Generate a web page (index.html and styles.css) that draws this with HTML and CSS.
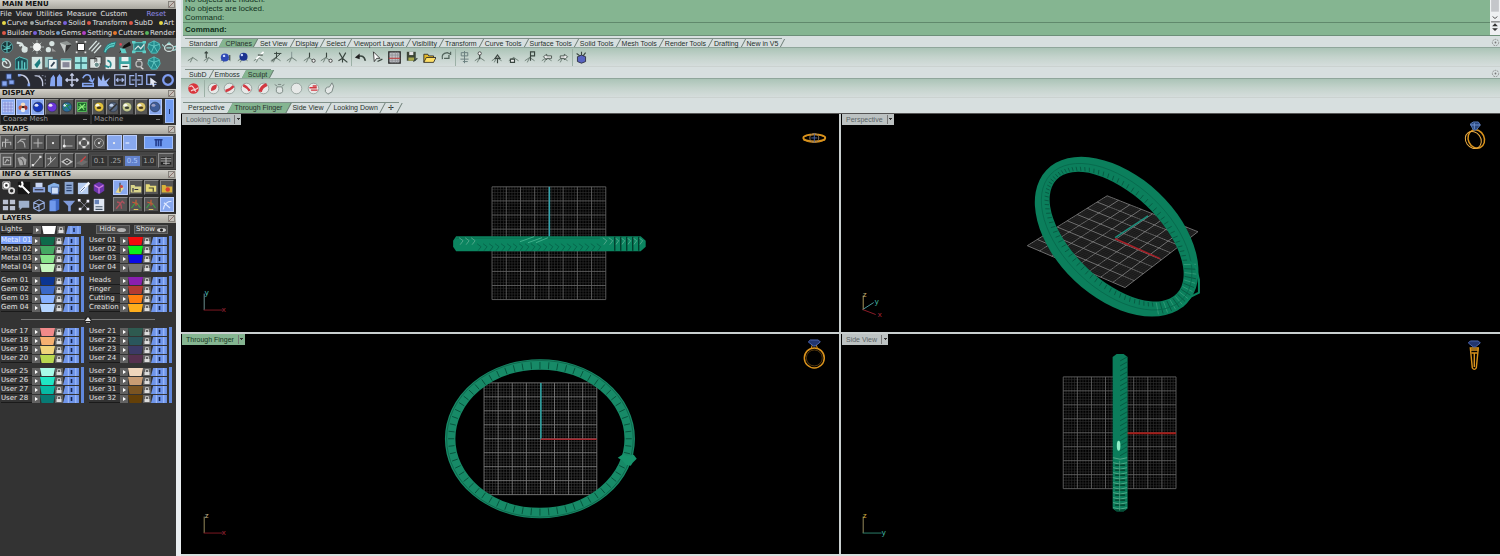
FILE: index.html
```html
<!DOCTYPE html>
<html lang="en">
<head>
<meta charset="utf-8">
<title>Jewelry CAD workspace</title>
<link rel="stylesheet" href="styles.css">
</head>
<body>
<div class="app">
  <aside class="sidebar">
    <section>
      <h2 class="panel-title">MAIN MENU<button class="close" aria-label="Close main menu"></button></h2>
      <nav class="menu">
        <button>File</button><button>View</button><button>Utilities</button><button>Measure</button><button>Custom</button><button class="reset">Reset</button>
      </nav>
      <nav class="cats">
        <button><i class="dot yellow"></i>Curve</button><button><i class="dot grey"></i>Surface</button><button><i class="dot violet"></i>Solid</button><button><i class="dot red"></i>Transform</button><button><i class="dot red"></i>SubD</button><button class="last"><i class="dot yellow"></i>Art</button>
      </nav>
      <nav class="cats tight">
        <button><i class="dot red"></i>Builder</button><button><i class="dot violet"></i>Tools</button><button><i class="dot steel"></i>Gems</button><button><i class="dot magenta"></i>Setting</button><button><i class="dot orange"></i>Cutters</button><button><i class="dot green"></i>Render</button>
      </nav>
      <div class="tools grey-bg">
        <div class="icons" data-icons="globe knot sun shade cone boxsel lines surf ink frame gem teapot"></div>
        <div class="icons" data-icons="hook towers page pages photo panes cards sheet disk ringlet gem none"></div>
      </div>
      <div class="icons blue-row" data-icons="blocks arc curve clap move rotate burst swap mirror pick ringb"></div>
    </section>

    <section>
      <h2 class="panel-title">DISPLAY<button class="close" aria-label="Close display"></button></h2>
      <div class="display">
        <div class="disp-left">
          <div class="icons boxed" data-icons="*grid *flower *sphere sphere2 sphere3 leaf"></div>
          <select aria-label="Mesh quality"><option>Coarse Mesh</option></select>
        </div>
        <div class="disp-right">
          <div class="icons boxed" data-icons="gold pearl pale gold2 *sphere4"></div>
          <select aria-label="Display material"><option>Machine</option></select>
        </div>
        <button class="tall" aria-label="Toggle display"></button>
      </div>
    </section>

    <section>
      <h2 class="panel-title">SNAPS<button class="close" aria-label="Close snaps"></button></h2>
      <div class="snaps">
        <div class="icons boxed nine" data-icons="s1 s2 s3 s4 s5 s6 s7 *s4 *s8"></div>
        <button class="wide" aria-label="Project"><svg viewBox="0 0 16 12"><path d="M3 2h10M5 2v8M8 2v8M11 2v8" stroke="#223c8c" stroke-width="2"/></svg></button>
      </div>
      <div class="snaps second">
        <div class="icons boxed six" data-icons="t1 t2 t3 t4 t5 t6"></div>
        <div class="steps"><button>0.1</button><button>.25</button><button class="on">0.5</button><button>1.0</button></div>
        <div class="icons boxed one" data-icons="t7"></div>
      </div>
    </section>

    <section>
      <h2 class="panel-title">INFO &amp; SETTINGS<button class="close" aria-label="Close info"></button></h2>
      <div class="info">
        <div class="icons seven" data-icons="gears wrench printer cubes doc pen purple"></div>
        <div class="icons boxed four" data-icons="*paint folder folder2 folder3"></div>
        <div class="icons seven" data-icons="bricks chat wire book funnel nodes calc"></div>
        <div class="icons boxed four" data-icons="j1 j2 j2 *j3"></div>
      </div>
    </section>

    <section>
      <h2 class="panel-title">LAYERS<button class="close" aria-label="Close layers"></button></h2>
      <div class="lights">
        <div class="layer-group" data-layers="Lights:#ffffff"></div>
        <div class="vis"><button>Hide <i class="eye"></i></button><button>Show <i class="eye open"></i></button></div>
      </div>
      <div class="layers">
        <div class="layer-group" data-layers="Metal 01:#0e6a4a|Metal 02:#43a862|Metal 03:#86e48a|Metal 04:#c5f7c0"></div>
        <div class="layer-group" data-layers="User 01:#f20d0d|User 02:#0af01a|User 03:#0808e6|User 04:#777777"></div>
        <div class="layer-group" data-layers="Gem 01:#0b3592|Gem 02:#3a68c8|Gem 03:#86b0ff|Gem 04:#b4d4ff"></div>
        <div class="layer-group" data-layers="Heads:#8a1fb0|Finger:#b33a32|Cutting:#ff7d0e|Creation:#ffae1c"></div>
      </div>
      <div class="divider"><svg viewBox="0 0 8 8"><circle cx="4" cy="4" r="3.5" fill="#222"/><path d="M1 5l3-4 3 4z" fill="#eee"/><path d="M2 6.500h4" stroke="#aaa"/></svg></div>
      <div class="layers">
        <div class="layer-group" data-layers="User 17:#f08a8a|User 18:#f5b070|User 19:#f0d47a|User 20:#b8d850"></div>
        <div class="layer-group" data-layers="User 21:#2e5a50|User 22:#2a565c|User 23:#3c3a66|User 24:#55304e"></div>
        <div class="layer-group" data-layers="User 25:#a8fbe8|User 26:#1fe6c4|User 27:#06b9a4|User 28:#087a74"></div>
        <div class="layer-group" data-layers="User 29:#f0d6bc|User 30:#c89c74|User 31:#7a5422|User 32:#644008"></div>
      </div>
    </section>
  </aside>

  <main class="main">
    <div class="console">
      <div class="history">
        <p>No objects are hidden.</p><p>No objects are locked.</p><p>Command:</p>
      </div>
      <div class="scroll"><svg viewBox="0 0 10 36"><rect x="1" y="0" width="8" height="12" fill="#c4c6ca"/><path d="M2.500 17l2.500 2 2.500-2M1 22.500h9" fill="none" stroke="#555"/><path d="M2 27h6L5 24zM2 29h6L5 32z" fill="#333"/></svg></div>
      <label class="prompt">Command: <input type="text" aria-label="Command"></label>
    </div>

    <div class="tabs">
      <button>Standard</button><button class="on">CPlanes</button><button>Set View</button><button>Display</button><button>Select</button><button>Viewport Layout</button><button>Visibility</button><button>Transform</button><button>Curve Tools</button><button>Surface Tools</button><button>Solid Tools</button><button>Mesh Tools</button><button>Render Tools</button><button>Drafting</button><button>New in V5</button>
      <button class="gear" aria-label="Toolbar options"><svg viewBox="0 0 10 10"><circle cx="5" cy="5" r="3.500" fill="none" stroke="#888" stroke-dasharray="2 1"/><circle cx="5" cy="5" r="1" fill="#777"/></svg></button>
    </div>
    <div class="toolbar">
      <div class="icons g10" data-icons="c1 c2 cball cball2 c3 c4 c5 c6 c6 c7"></div>
      <div class="icons g6 sep" data-icons="undo cursor mesh save open rot"></div>
      <div class="icons g7 sep" data-icons="cfront cpole cup cside cbox cleft cright"></div>
      <div class="icons g1 sep" data-icons="cblue"></div>
    </div>

    <div class="tabs second">
      <button>SubD</button><button>Emboss</button><button class="on">Sculpt</button>
      <button class="gear" aria-label="Toolbar options"><svg viewBox="0 0 10 10"><circle cx="5" cy="5" r="3.500" fill="none" stroke="#888" stroke-dasharray="2 1"/><circle cx="5" cy="5" r="1" fill="#777"/></svg></button>
    </div>
    <div class="toolbar">
      <div class="icons g1" data-icons="r0"></div>
      <div class="icons g8 sep" data-icons="r1 r2 r3 r4 r5 r6 r7 r8"></div>
    </div>

    <div class="tabs views">
      <button>Perspective</button><button class="on">Through Finger</button><button>Side View</button><button>Looking Down</button><button aria-label="New viewport">✢</button>
    </div>

    <div class="viewports">
      <section class="viewport">
        <svg class="scene" viewBox="181 114 658 218">
          <g data-grid="492 187 606 300" opacity=".8"></g>
          <path d="M549.500 187v50" stroke="#2fa3ad" stroke-width="1.500"/>
          <path d="M456 236.500H641L646 241V247L641 251.500H456L453 247V241Z" fill="#0b8560"/>
          <path d="M456 238.500H600" stroke="#0c6f52"/>
          <path d="M520 242l14-5M528 243l14-5M536 243l12-5" stroke="#3fb08b"/>
          <g id="band-top"></g>
          <path d="M203.500 294v16.500" stroke="#6a8f90"/><path d="M203 310.500h19" stroke="#7d1822"/>
          <text x="204" y="295" fill="#4ab5b0">y</text><text x="221" y="312" fill="#a52638">x</text>
          <g transform="translate(815 138)" fill="none" stroke="#d9921c"><ellipse rx="11" ry="3.500" stroke-width="1.800"/><path d="M-11 2q11 5 22 0M-11-1q11-5 22 0"/><ellipse cy="0" rx="4.500" ry="4.500" stroke="#90785a"/><path d="M-3 0h6M0-4v8" stroke="#4561a0"/></g>
        </svg>
        <button class="vp-label">Looking Down<span></span></button>
      </section>
      <section class="viewport">
        <svg class="scene" viewBox="841 114 659 218">
          <g id="plane"></g>
          <path d="M1115 238L1148 216" stroke="#1b8f7d" stroke-width="1.500"/><path d="M1115 239L1160 259" stroke="#a82028" stroke-width="1.500"/>
          <g id="persp"></g>
          <path d="M862.500 296v14.500" stroke="#a8965a"/><path d="M862 310l11-7" stroke="#4a9a9c"/><path d="M862 310l13 5" stroke="#8d1c28"/>
          <text x="862" y="297" fill="#c0b070">z</text><text x="874" y="304" fill="#3fae9e">y</text><text x="877" y="317" fill="#b02636">x</text>
          <g transform="translate(1475 135)" fill="none" stroke="#d9921c"><ellipse cx="2" cy="4" rx="8" ry="9.500" transform="rotate(-25 2 4)" stroke-width="1.500"/><ellipse cx="-1" cy="5" rx="7.500" ry="9" transform="rotate(-35 -1 5)" stroke="#edae45"/><path d="M-4-11l3-2h5l2 3-4 5h-3z" fill="#29477d" stroke="#5476b4"/><path d="M-4-10H6M0-6v-6" stroke="#6c90cd"/></g>
        </svg>
        <button class="vp-label">Perspective<span></span></button>
      </section>
      <section class="viewport">
        <svg class="scene" viewBox="181 333 658 221">
          <g data-grid="484 382 597 494"></g>
          <path d="M541 382v56" stroke="#2aa5a5" stroke-width="1.500"/><path d="M541 438.500h56" stroke="#a5252c" stroke-width="1.700"/>
          <g id="finger"></g>
          <path d="M203.500 516v16.500" stroke="#95895a"/><path d="M203 532.500h19" stroke="#7d1822"/>
          <text x="204" y="517" fill="#c0b48a">z</text><text x="221" y="534" fill="#a52638">x</text>
          <g transform="translate(815 357)" fill="none" stroke="#d9921c"><circle r="10" stroke-width="1.500"/><circle r="8" stroke="#8a5c18" stroke-width=".6"/><path d="M-3-10l1-3h4l1 3"/><path d="M-6-16l2-2h8l2 2-5 4h-2z" fill="#22356e" stroke="#4a64b0"/></g>
        </svg>
        <button class="vp-label on">Through Finger<span></span></button>
      </section>
      <section class="viewport">
        <svg class="scene" viewBox="841 333 659 221">
          <g data-grid="1063 376 1176 488" opacity=".8"></g>
          <path d="M1127 432.500h49" stroke="#a31c18" stroke-width="2"/>
          <path d="M1112.500 356l4-3h7l4 3v152l-4 3h-7l-4-3z" fill="#0b7d5b"/>
          <g id="band-side"></g>
          <ellipse cx="1118.500" cy="445" rx="1.800" ry="5" fill="#8ff0c8"/>
          <path d="M862.500 516v16.500" stroke="#95895a"/><path d="M862 532.500h19" stroke="#2b7d68"/>
          <text x="862" y="517" fill="#d0b040">z</text><text x="881" y="534" fill="#3fae9e">y</text>
          <g transform="translate(1475 355)" fill="none" stroke="#d9921c" stroke-width="1.400"><path d="M-4-8h8l-2 20q-2 3-4 0z"/><path d="M-4-6h8M-3-3h6M0-3v14"/><path d="M-6-13l2-2h8l2 2-5 4h-2z" fill="#22356e" stroke="#4a64b0" stroke-width="1"/></g>
        </svg>
        <button class="vp-label">Side View<span></span></button>
      </section>
    </div>
  </main>
</div>
<script src="app.js"></script>
</body>
</html>
```

FILE: styles.css
```css
* { box-sizing: border-box; }
body { margin: 0; background: #d7dfdf; font-family: "Liberation Sans", Arial, sans-serif; font-size: 7px; }
button, select, input { font: inherit; color: inherit; margin: 0; padding: 0; border: 0; border-radius: 0; background: none; }
h2, p { margin: 0; }
.app { display: flex; min-height: 100vh; }

.sidebar { width: 181px; flex: none; background: #333; border-right: 5px solid #e9edf0; font-family: "DejaVu Sans", Verdana, sans-serif; color: #e2e2e2; overflow: hidden; }
.panel-title { display: flex; align-items: center; justify-content: space-between; height: 9px; margin-top: 1px; padding: 0 1px 0 2px; font-size: 7px; line-height: 9px; font-weight: bold; color: #111; background: linear-gradient(#d2d0c9, #a9a79f); white-space: nowrap; }
.sidebar section:first-child .panel-title { margin-top: 0; }
.close { width: 7px; height: 7px; border: 1px solid #85827c; background: linear-gradient(135deg, #c2bfb8 45%, #8e6f6c 50%, #c2bfb8 55%); }
.menu, .cats { display: flex; align-items: center; height: 10px; background: #262626; white-space: nowrap; }
.menu { gap: 4px; height: 9px; }
.reset { margin-left: auto; margin-right: 10px; color: #8f8be6; }
.cats { gap: 2px; padding-left: 2px; overflow: hidden; }
.cats.tight { gap: 1px; }
.cats button { display: flex; align-items: center; gap: 1px; }
.cats .last { margin-left: auto; margin-right: 2px; }
.dot { width: 4px; height: 4px; border-radius: 2px; }
.yellow { background: #e6d848; } .grey { background: #98a2a0; } .violet { background: #7760dc; } .red { background: #dc5848; }
.steel { background: #6f9bc8; } .magenta { background: #b340c4; } .orange { background: #e8772c; } .green { background: #58b45c; }

.icons { display: flex; align-items: center; height: 17px; }
.icons button { flex: 1; min-width: 0; height: 15px; display: flex; align-items: center; justify-content: center; }
.icons svg { width: 14px; height: 14px; flex: none; }
.tools { background: #5c5e5e; }
.tools .icons + .icons { height: 16px; }
.blue-row { background: #292b33; }
.boxed button { margin: 0 1px 0 0; border: 1px solid #8a8a8a; border-right-color: #303030; border-bottom-color: #303030; background: #555; }
.boxed svg { width: 12px; height: 12px; }
.boxed button.on { background: #88a8ee; border-color: #b9ccfa; }
.display { display: flex; height: 26px; gap: 2px; padding-left: 1px; }
.disp-left { width: 89px; } .disp-right { width: 71px; }
.display .boxed button { height: 16px; }
.display select { display: block; width: 100%; height: 9px; background: linear-gradient(#777, #777) right 3px center / 4px 1px no-repeat #191919; color: #999; appearance: none; padding-left: 2px; line-height: 9px; }
.tall { width: 9px; margin: 1px 0; background: #6f9bf2; border: 1px solid #a5c1fa; }
.tall::after { content: ""; display: block; width: 1px; height: 5px; margin: 0 auto; background: #20366c; }
.snaps { display: flex; align-items: center; height: 17px; background: #454545; }
.snaps.second { margin-top: 1px; }
.nine { width: 138px; } .six { width: 90px; } .one { width: 17px; }
.wide { width: 29px; height: 13px; margin-left: 6px; background: #6f9bf2; border: 1px solid #a5c1fa; display: flex; align-items: center; justify-content: center; }
.wide svg { width: 13px; height: 10px; }
.steps { display: flex; width: 66px; margin: 0 1px; }
.steps button { flex: 1; height: 12px; color: #a8a8a8; background: #333; border: 1px solid #4d4d4d; }
.steps .on { background: #6382cc; color: #adc8ff; }
.info { display: grid; grid-template-columns: 104px 62px; justify-content: space-between; padding: 0 1px 0 2px; background: #2c2c2c; }

.lights { display: grid; grid-template-columns: 88px 1fr; align-items: center; height: 13px; }
.vis { display: flex; gap: 4px; padding: 0 8px 0 8px; }
.vis button { display: flex; align-items: center; justify-content: center; gap: 2px; flex: 1; height: 9px; background: #4b4b4b; border: 1px solid #6a6a6a; line-height: 7px; }
.eye { width: 9px; height: 4px; border-radius: 50%; background: #b5b5b5; }
.eye.open { background: radial-gradient(circle, #222 1px, #d0d0d0 2px); }
.layers { display: grid; grid-template-columns: 88px 88px; row-gap: 4px; }
.layer-group { width: 84px; padding-left: 1px; }
.layers .layer-group { border-right: 3px solid #6088dd; }
.layer { display: grid; grid-template-columns: 31px 8px 14px 8px 16px; column-gap: 1px; align-items: center; height: 9px; line-height: 8px; }
.layers .layer { column-gap: 0; grid-template-columns: 31px 8px 15px 8px 17px; }
.layer-name { white-space: nowrap; height: 9px; text-align: left; border-bottom: 1px solid #1a1a1a; }
.layer-name.on { background: #7ba0f8; color: #e6eeff; }
.layer button { min-width: 0; }
.layer button:not(.layer-name) { height: 8px; }
.layer svg { display: block; width: 100%; height: 8px; }
.layer .arrow, .layer .lock { background: #626262; }
.divider { display: flex; align-items: center; justify-content: center; height: 15px; background: linear-gradient(90deg, transparent 12%, #777 12%, #777 88%, transparent 88%) center / 100% 1px no-repeat; }
.divider svg { width: 8px; height: 8px; }

.main { flex: 1; min-width: 0; display: flex; flex-direction: column; padding-bottom: 2px; }
.console { display: grid; grid-template-columns: 1fr 10px; grid-template-rows: 22px 13px; margin-left: 2px; font-size: 8px; color: #10301c; border-bottom: 1px solid #6c8f78; }
.history { display: flex; flex-direction: column; justify-content: flex-end; overflow: hidden; background: #85b591; padding-left: 2px; line-height: 9px; }
.prompt { display: flex; align-items: center; gap: 3px; background: #85b591; border-top: 1px solid #60896c; padding-left: 2px; font-weight: bold; }
.prompt input { flex: 1; height: 11px; outline: 0; }
.scroll { grid-row: 1 / 3; grid-column: 2; background: #eef0f2; }
.scroll svg { display: block; width: 10px; height: 35px; }

.tabs { display: flex; align-items: flex-end; height: 12px; padding-left: 4px; border-bottom: 1px solid #8fa69b; color: #26302c; }
.tabs button { position: relative; z-index: 0; height: 9px; padding: 0 4px; line-height: 10px; white-space: nowrap; border-top: 1px solid #7f9089; }
.tabs button:not(.gear)::before { content: ""; position: absolute; z-index: -1; inset: 0 -1px 0 0; border-right: 1px solid #6c7d76; transform: skewX(-28deg); }
.tabs .on::before { background: #85b591; }
.tabs .gear { margin-left: auto; height: 10px; border: 0; padding: 0; }
.gear svg { display: block; width: 9px; height: 9px; }
.toolbar { display: flex; align-items: center; height: 19px; padding-left: 4px; background: linear-gradient(#abc4b7, #c4d3cc 50%, #d5dddc); border-bottom: 1px solid #cbd2d0; }
.toolbar .icons svg { width: 13px; height: 13px; }
.g10 { width: 166px; } .g6 { width: 104px; } .g7 { width: 117px; } .g1 { width: 17px; } .g8 { width: 134px; }
.sep { border-left: 1px solid #9cb0a6; }
.toolbar .g1 + .sep { margin-left: 2px; }
.views { height: 16px; padding-left: 2px; border-bottom-color: #555; }
.views button { height: 11px; line-height: 10px; padding: 0 5px; }

.viewports { flex: 1; display: grid; grid-template-columns: 658fr 659fr; grid-template-rows: 218fr 221fr; gap: 2px; background: #c9cfcf; }
.viewport { position: relative; background: #000; min-height: 0; overflow: hidden; }
.scene { position: absolute; inset: 0; width: 100%; height: 100%; }
.scene text { font-family: "Liberation Sans", Arial, sans-serif; font-size: 8px; }
.vp-label { position: absolute; top: 0; left: 1px; display: flex; align-items: center; height: 11px; padding-left: 4px; background: #bcc2c2; color: #5b6466; }
.vp-label span { width: 7px; height: 9px; margin-left: 4px; border-left: 1px solid #777; background: conic-gradient(from -45deg at 50% 65%, #333 90deg, transparent 0) center / 5px 3px no-repeat; }
.vp-label.on { background: #85b591; color: #17351f; }
```

FILE: app.js
```js
const W = '#d8e4e2', T = '#5fcfc8', B = '#86a6f0', G = '#b8b8b8', D = '#39453f';
const p = (d, s, w = 1.4, f = 'none') => `<path d="${d}" stroke="${s}" stroke-width="${w}" fill="${f}"/>`;
const ball = (c, hi = '#fff') => `<circle cx="8" cy="8" r="6.500" fill="${c}" stroke="#263040" stroke-width=".8"/><ellipse cx="6" cy="5.500" rx="2.600" ry="2" fill="${hi}" opacity=".85"/>`;
const axis = (extra = '') => p('M1 12l6-4 6 4M7 8l-3 6', '#5f7068', 1) + extra;
const red = d => `<circle cx="8" cy="8" r="6.500" fill="#e7e9e8" stroke="#7b8a85" stroke-width=".8"/>${d}`;

const icons = {
  none: '',
  globe: `<circle cx="8" cy="8" r="6.500" fill="#19363a" stroke="#5a9a9c"/>` + p('M3 6q5 5 10-1M4 11l8-2M8 2v12', T, 1.2),
  knot: p('M2 3l5 1 3 4 4 2M5 7l4-3', W, 2.5) + `<circle cx="11" cy="11" r="3.500" fill="${W}"/>`,
  sun: p('M8 0v16M0 8h16M3 3l10 10M13 3L3 13', '#b9c2c0', 1) + `<circle cx="8" cy="8" r="4.500" fill="#f2f5f4"/>`,
  shade: `<circle cx="9" cy="4" r="3" fill="${W}"/><circle cx="5" cy="11" r="3" fill="${W}"/><path d="M9 9l5 4H9z" fill="#999"/>`,
  cone: `<path d="M1 3l8-2 6 4-8 10z" fill="#8f9593"/><path d="M1 3l7 3-1 9z" fill="#c4c9c7"/><path d="M8 6l7-1-8 10z" fill="#333"/>`,
  boxsel: `<path d="M4 4h8v8H4z" fill="#fff" stroke="#222"/>` + p('M2 2h2M12 2h2M2 14h2M12 14h2', '#ddd', 2),
  lines: p('M1 11L10 1M4 13l9-10M7 15l8-9', W, 1.6),
  surf: `<path d="M1 13Q3 3 15 2l-2 6Q5 8 3 15z" fill="${T}" stroke="#1f6f74"/>` + p('M3 10q4-5 10-5', '#2a8286', 1),
  ink: `<path d="M1 15l6-9 6-4 2 4-7 3z" fill="#101010"/><path d="M2 9l6 1 2 5H4z" fill="${T}"/><circle cx="3" cy="5" r="1.500" fill="#d45"/>`,
  frame: `<path d="M2 3h12v10H2z" fill="#2a7c7e" stroke="${T}"/>` + p('M3 11l4-4 3 3 4-5', W) + `<path d="M0 1h4v3H0zM12 1h4v3h-4zM0 12h4v3H0zM12 12h4v3h-4z" fill="${T}"/>`,
  gem: `<path d="M8 1l6 3 1 5-4 6H5L1 9l1-5z" fill="#238a8c" stroke="#54c4c0"/>` + p('M2 5l6 2 6-2M8 7l-3 7M8 7l4 7M8 1v6', '#7adad4', .8),
  teapot: `<ellipse cx="8" cy="9" rx="5" ry="4" fill="none" stroke="${W}" stroke-width="1.500"/>` + p('M3 8L0 5M13 8l3-1v4l-4 1M6 4h4M8 2v3M5 9h6', '#9ddad5', 1.2),
  hook: p('M3 3q8 0 9 7M12 10q0 4-5 3t-4-6q3-3 5 2', W, 1.6) + `<circle cx="4" cy="4" r="2" fill="${T}"/>`,
  towers: `<path d="M0 15V4l5-3 9 3v11z" fill="#1b4d55" stroke="${T}"/>` + p('M4 15V6M8 15V5M11 15V7', T, 1.5),
  page: `<path d="M2 1h12v14H2z" fill="#d5e5e3"/><path d="M5 10l6-7 1 5-4 6z" fill="#1d7d80"/>`,
  pages: `<path d="M1 1h9v12H1z" fill="#9dc9c6"/><path d="M5 4h10v11H5z" fill="#ecf1f0" stroke="#367"/>` + p('M8 12l4-5', '#345', 2),
  photo: `<path d="M2 3h12v12H2z" fill="#e2e7e6"/><path d="M4 7h8v6H4z" fill="#889"/><path d="M2 3h12v2H2z" fill="#52a5a5"/>`,
  panes: `<path d="M1 1h14v14H1z" fill="#9ce4e0"/>` + p('M8 1v14M1 8h14', '#31686c', 1.5),
  cards: `<path d="M2 3h8v11H2zM8 1h7v8H8z" fill="#dbe2e1" stroke="#333"/><circle cx="10" cy="10" r="3" fill="#6b8f8d" stroke="#fff"/>`,
  sheet: `<path d="M3 1h11v14H3z" fill="#e4ebea"/>` + p('M5 5q6 2 3 8M2 11l5 2', '#2b8c8f', 2),
  disk: `<path d="M1 1h14v14H1z" fill="#3aa6a3"/><path d="M4 1h8v5H4zM3 9h10v6H3z" fill="#e9f0ef"/>` + p('M5 12h6', '#333'),
  ringlet: `<circle cx="8" cy="9" r="3.500" fill="none" stroke="${G}" stroke-width="1.500"/>` + p('M6 4h5M10 13l3 2', '#ddd'),
  blocks: `<path d="M1 9h6v6H1zM9 8h6v5H9zM6 1h6v6H6z" fill="${B}" stroke="#2e4274"/>`,
  arc: p('M2 2q11 0 12 12', '#c5cbe0', 1.6) + `<path d="M1 1h3v3H1zM12 12h3v3h-3z" fill="${B}"/>`,
  curve: p('M2 3q10 0 9 12', '#c5cbe0', 1.5) + p('M2 3h12v12', '#8b92a8', 1).replace('<path', '<path stroke-dasharray="2 2"'),
  clap: `<path d="M1 15l1-9 3-4 2 3v10zM15 15V5l-3-4-3 4v10z" fill="${B}"/>` + p('M8 1v14', '#223', 1),
  move: p('M8 1v14M1 8h14M6 3l2-2 2 2M6 13l2 2 2-2M3 6L1 8l2 2M13 6l2 2-2 2', '#c8d0ea', 1.6),
  rotate: p('M2 6q3-6 8-3l2 6M9 8l4 2 2-4M2 12h12v3H2z', B, 1.8),
  burst: `<path d="M1 15V3l4 6 2-8 2 8 6-4-4 6 3 4z" fill="#9ab5f4"/>`,
  swap: p('M2 2h12v12H2zM4 8h8M6 6L4 8l2 2M10 6l2 2-2 2', '#a9b9e8'),
  mirror: p('M8 0v16M6 3H1v10h5M10 3h5v10h-5M3 8h4M9 8h4', '#9fb4ec'),
  pick: p('M13 13H2V2h10', '#8ea6e6', 1.6) + `<path d="M6 5l8 6-4 0 1 4-2 1-1-4-2 2z" fill="#e6eaf6"/>`,
  ringb: `<circle cx="8" cy="8" r="5.500" fill="none" stroke="#7e9cf0" stroke-width="2.600"/>`,
  grid: `<path d="M1 1h14v14H1z" fill="#b9c9f7"/>` + p('M4 1v14M8 1v14M12 1v14M1 4h14M1 8h14M1 12h14', '#7277c8', .8),
  flower: `<circle cx="8" cy="5" r="3" fill="#f4ddc0"/><circle cx="5" cy="9" r="3" fill="#c25a3a"/><circle cx="11" cy="9" r="3" fill="#9c3330"/><circle cx="8" cy="12" r="3" fill="#eee"/><circle cx="8" cy="8" r="1.500" fill="#222"/>`,
  sphere: ball('#1434b8'), sphere2: ball('#6a35d8'), sphere3: ball('#2b6f9e') + p('M3 11q5-7 10-6M5 3l7 9', '#183', 1.2), sphere4: ball('#3e5c98', '#aac'),
  leaf: `<path d="M2 2h12v12H2z" fill="#1c6b2c" stroke="#5bcb5c"/>` + p('M3 12l9-8M5 4l6 8M3 8h10', '#8df07a'),
  gold: ball('#e3c23c') + `<ellipse cx="8" cy="9" rx="3" ry="1.800" fill="#42351a"/>`, pearl: ball('#54657e', '#d6e6ff') + p('M4 13l9-9', '#333', 2),
  pale: ball('#c5c98c') + `<ellipse cx="8" cy="9" rx="3" ry="1.800" fill="#3c4034"/>`, gold2: ball('#dcc66a') + `<ellipse cx="8" cy="9" rx="3" ry="1.800" fill="#4b3c1c"/>`,
  s1: p('M6 2v12M2 13V7h11v4M6 4h4', G), s2: p('M2 8l5-5h6M5 5q7 0 7 9', G), s3: p('M8 2v12M2 8h12', G), s4: `<circle cx="8" cy="8" r="1.500" fill="#eee"/>`,
  s5: p('M3 3v9h11', G) + `<circle cx="3" cy="12" r="2" fill="#eee"/>`, s6: `<circle cx="8" cy="8" r="5" fill="none" stroke="${G}"/><path d="M6 1h4v3H6zM6 12h4v3H6zM1 6h3v4H1zM12 6h3v4h-3z" fill="#ddd"/>`,
  s7: `<circle cx="8" cy="8" r="6" fill="none" stroke="${G}"/><circle cx="8" cy="8" r="1.500" fill="#eee"/>` + p('M8 8l3-3', G), s8: p('M2 8h5', '#eaf0ff', 1.5),
  t1: p('M3 3h10v10H3zM5 11l3-5 3 2', G), t2: `<path d="M2 4l7-2 5 4-1 7-8 1z" fill="#a5a5a5"/>` + p('M5 5q5 0 5 8', '#555'), t3: p('M3 14L13 2', G) + `<path d="M1 12h3v3H1zM11 1h3v3h-3z" fill="#ddd"/>`,
  t4: p('M2 14L13 3M2 5h6M6 2v8', G), t5: `<path d="M0 9l8-5 8 5-8 5z" fill="#c3c3c3"/>` + p('M5 9l3-2 3 2-3 2z', '#333'), t6: `<path d="M0 11l8-5 8 3-8 5z" fill="#6d6d6d"/>` + p('M6 9L13 2', '#c44', 1.6),
  t7: `<path d="M1 3h14v10H1z" fill="#222"/>` + p('M1 5h14M1 8h14M4 11h9M8 3v10', G),
  gears: p('M1 1h8v8H1z', '#ddd', 1) + `<circle cx="5" cy="5" r="2.500" fill="none" stroke="#fff" stroke-width="2"/><circle cx="11" cy="11" r="3" fill="none" stroke="#ddd" stroke-width="2"/>`,
  wrench: `<path d="M1 1h14v14H1z" fill="#151515"/>` + p('M5 5l9 9M2 5q3 3 4 0T5 1', '#fff', 2.4),
  printer: `<path d="M1 7h14v6H1z" fill="#8ba4dc"/><path d="M4 2h8v5H4z" fill="#c9d6f4"/>` + p('M3 10h10', '#334'),
  cubes: `<path d="M1 5l7-3 6 2v8l-7 3-6-3z" fill="#86b0e8"/><path d="M5 7h8v8H5z" fill="#cfdff8" stroke="#3c5c9c"/>`,
  doc: `<path d="M3 1h10v14H3z" fill="#8aa5d0"/>` + p('M5 5h6M5 8h6M5 11h6', '#28406c'), pen: `<path d="M1 2h12v13H1z" fill="#b6cdf0"/>` + p('M4 12L14 2', '#f4f8ff', 3) + p('M4 12l5-5', '#45608f', 1),
  purple: `<path d="M8 1l6 3v7l-6 4-6-4V4z" fill="#6c35ac"/>` + p('M3 5l5 3 5-3M8 8v6', '#d17ae2', 1.4),
  paint: `<path d="M2 14L9 3l4 5-5 7z" fill="#e8d88c"/>` + p('M8 1v12', '#333') + `<circle cx="10" cy="6" r="2" fill="#c44"/>`,
  folder: `<path d="M1 4h5l1 2h8v8H1z" fill="#d8d48a"/>` + p('M6 10h5M4 8v5', '#334', 1.6), folder2: `<path d="M1 3h5l1 2h8v8H1z" fill="#e3d878"/>` + p('M5 8h6v5', '#443', 1.6),
  folder3: `<path d="M1 4h5l1 2h8v8H1z" fill="#d8b23a"/><circle cx="9" cy="10" r="3" fill="#d84030"/>`,
  bricks: `<path d="M1 2h6v5H1zM9 2h6v5H9zM1 9h6v5H1zM9 9h6v5H9z" fill="#b9c0d0"/>`, chat: `<path d="M2 3h12v8H6l-3 3v-3H2z" fill="#9eb0cc"/>`,
  wire: p('M2 5l6-3 6 3v7l-6 3-6-3zM2 5l6 3 6-3M8 8v7M2 12l12-7', '#98aee0', 1.2), book: `<path d="M3 3l4-2h7v12l-4 2H3z" fill="#3f68c4"/><path d="M3 3h7v12H3z" fill="#6f99ec"/>`,
  funnel: `<path d="M1 3h14L10 9v6H7V9z" fill="#7f9ad8"/>`, nodes: p('M3 3l9 9M12 4l-8 9', '#889', 1) + `<path d="M1 1h3v3H1zM11 2h3v3h-3zM2 11h3v3H2zM11 11h3v3h-3z" fill="#eef"/>`,
  calc: `<path d="M2 1h12v14H2z" fill="#dfe6f2"/><path d="M3 2h5v5H3z" fill="#6884b8"/>` + p('M4 10h8M4 13h8', '#456'),
  j1: p('M3 13L11 3l3 3M4 4q6 0 6 9', '#b0505c', 1.8), j2: p('M2 12l6-8 6 8', '#3d9d48', 1.6) + p('M8 1v8M3 4l8 3', '#cc5538', 1.6) + p('M5 14h6', '#ddc35c'), j3: p('M3 14Q5 3 14 3M4 5l8 7', '#dfe9ff', 1.6),
  c1: axis(), c2: axis(p('M4 9V1M2 3l2-2 2 2', D)), cball: axis(`<circle cx="6" cy="8" r="5" fill="#2e4ab4"/><circle cx="5" cy="6" r="1.500" fill="#ccd8ff"/>` + p('M12 5v6', D)), cball2: axis(`<circle cx="8" cy="7" r="5" fill="#1c3490"/><circle cx="6" cy="5" r="1.500" fill="#ccd8ff"/>`),
  c3: axis(p('M4 10L13 1', '#fff', 2) + p('M6 5h6', D)), c4: axis(p('M2 13L13 3M5 3h9M8 1v8', D, 1.2)), c5: axis(p('M7 8V1', '#788', 1)), c6: axis(p('M8 2v6', D) + '<circle cx="13" cy="12" r="2" fill="#eee" stroke="#333"/>'), c7: p('M4 2l4 7 4-7M3 12l5-3 6 5M8 9v5', D, 1.4),
  undo: p('M14 12Q12 4 5 7', D, 2) + `<path d="M1 8l6-5v7z" fill="#222"/>`, cursor: `<path d="M3 1l8 8H7l-3 4z" fill="#fff" stroke="#222"/>` + p('M8 13l6-3', D),
  mesh: `<path d="M1 1h14v14H1z" fill="#bfc0c4" stroke="#222" stroke-width="1.600"/>` + p('M5 1v14M9 1v14M12 1v14M1 5h14M1 12h14', '#85868c', .8) + p('M1 9h14', '#b44'),
  save: `<path d="M1 1h11v11H1z" fill="#3d4738"/><path d="M4 1h5v4H4z" fill="#e6e6e6"/><path d="M3 8h7v4H3z" fill="#a7a94c"/>` + p('M9 13l5-4', D),
  open: `<path d="M1 14V4h5l1 2h6v2" fill="#e2b828" stroke="#222"/><path d="M1 14l3-6h12l-3 6z" fill="#ffe066" stroke="#222"/>`,
  rot: p('M3 10q-2-7 6-8l4 2M13 1v4M5 9h6V5', '#53645c', 1.6), cfront: p('M4 2h8v4H4zM8 0v15M3 10h10M6 13h6', '#6b8080', 1.2), cpole: axis('<circle cx="7" cy="3" r="2" fill="#fff" stroke="#333"/>' + p('M7 5v5', D)),
  cup: axis(p('M8 15V8M5 9l3-4 3 4z', D, 1.4, '#eee')), cside: axis(p('M3 10h5v4H3z', D, 1.4, '#eee')), cbox: axis(p('M8 1h5v5H8zM8 2v10', D, 1.4)), cleft: axis(p('M3 7l4-3v2h6v3H7v2z', D, 1, '#eee')), cright: axis(p('M13 7L9 4v2H4v3h5v2z', D, 1, '#eee')),
  cblue: `<path d="M3 7l5-2 5 2v6l-5 2-5-2z" fill="#5864c0" stroke="#223"/>` + p('M2 3l4 3M8 1v4M13 2l-3 4', D),
  r0: `<circle cx="8" cy="8" r="6.500" fill="#d9353c"/>` + p('M3 6q3-3 5 1t6 0M5 11q4-3 6 1', '#f0d8d8'),
  r1: red(`<path d="M5 11q-1-7 7-8 1 7-7 8" fill="#d23840"/>`), r2: red(p('M3 11q6-1 10-6', '#d23840', 3)), r3: red(p('M4 4q5 2 8 7', '#d23840', 3)), r4: red(p('M4 12Q5 6 12 3', '#d23840', 4)),
  r5: p('M5 6q-3 8 3 8t3-8zM2 3l3 2M14 3l-3 2M6 3h4', '#7b8884', 1.2, '#dfe5e3'), r6: red(''), r7: red(p('M3 7h9M5 10h8M7 5h5', '#d23840', 1.8)), r8: p('M3 12Q2 6 8 6l3-5 2 4-2 7-5 3z', '#7b8884', 1.2, '#e3e7e6')
};

document.querySelectorAll('[data-icons]').forEach(row => {
  row.innerHTML = row.dataset.icons.split(' ').map(n => {
    const on = n[0] === '*', key = on ? n.slice(1) : n;
    return key === 'none' ? '<button disabled aria-label="Empty"></button>'
      : `<button${on ? ' class="on"' : ''} aria-label="Tool ${key}"><svg viewBox="0 0 16 16">${icons[key]}</svg></button>`;
  }).join('');
});

document.querySelectorAll('[data-layers]').forEach(group => {
  group.innerHTML = group.dataset.layers.split('|').map(item => {
    const [name, color] = item.split(':');
    return `<div class="layer"><button class="layer-name${name === 'Metal 01' ? ' on' : ''}">${name}</button>
      <button class="arrow" aria-label="Select ${name}"><svg viewBox="0 0 8 8"><path d="M3 2l3 2-3 2z" fill="#fff"/></svg></button>
      <button aria-label="Color ${name}"><svg viewBox="0 0 14 8" preserveAspectRatio="none"><path d="M0 0h14l-1.500 8H1.500z" fill="${color}"/></svg></button>
      <button class="lock" aria-label="Lock ${name}"><svg viewBox="0 0 8 8"><path d="M2.500 4V1.500h3V4" fill="none" stroke="#bbb"/><path d="M1.500 4h5v3h-5z" fill="#ddd"/></svg></button>
      <button aria-label="Show ${name}"><svg viewBox="0 0 16 8" preserveAspectRatio="none"><path d="M2 0h13v8H0z" fill="#6f95ea"/><path d="M5 0v8M12 0v8" stroke="#a3bff9"/><path d="M8 2v4" stroke="#152550" stroke-width="1.500"/></svg></button></div>`;
  }).join('');
});

const line = (x1, y1, x2, y2, s, w = 1) => `<path d="M${x1} ${y1}L${x2} ${y2}" stroke="${s}" stroke-width="${w}" fill="none"/>`;

document.querySelectorAll('[data-grid]').forEach(g => {
  const [x1, y1, x2, y2] = g.dataset.grid.split(' ').map(Number);
  let minor = '', major = '';
  for (let i = 0; i <= 40; i++) {
    const x = x1 + (x2 - x1) * i / 40, y = y1 + (y2 - y1) * i / 40;
    const l = (s, w) => line(x, y1, x, y2, s, w) + line(x1, y, x2, y, s, w);
    if (i % 5) minor += l('#383838', .7); else major += l('#7c7c7c', .9);
  }
  g.innerHTML = minor + major;
});

const corners = [[1107, 196], [1198, 232], [1125, 288], [1027, 246]];
const at = (u, v) => [0, 1].map(k => (1 - u) * (1 - v) * corners[0][k] + u * (1 - v) * corners[1][k] + u * v * corners[2][k] + (1 - u) * v * corners[3][k]);
let plane = `<path d="M${corners.join('L')}Z" fill="#191919"/>`;
for (let i = 0; i <= 40; i++) {
  const s = i % 5 ? '#2b2b2b' : '#7a7a7a', w = i % 5 ? .5 : .9;
  plane += line(...at(i / 40, 0), ...at(i / 40, 1), s, w) + line(...at(0, i / 40), ...at(1, i / 40), s, w);
}
document.getElementById('plane').innerHTML = plane;

const ell = (a, b) => `M${-a} 0A${a} ${b} 0 1 0 ${a} 0A${a} ${b} 0 1 0 ${-a} 0Z`;
let ring = `<path d="${ell(97, 61)}${ell(83, 43)}" fill="#0b7f5c" fill-rule="evenodd"/>`;
for (let i = 0; i < 90; i++) {
  const t = i * Math.PI / 45, c = Math.cos(t), s = Math.sin(t);
  const far = t < .5 || t > 5.6;
  ring += line(84 * c, 44 * s, (far ? 95 : 88) * c, (far ? 59 : 49) * s, far && i % 2 ? '#2f9a76' : '#075a42', .9);
}
ring += `<path d="${ell(91, 53)}" fill="none" stroke="#07674b" stroke-width=".8"/>`;
document.getElementById('persp').innerHTML = `<g transform="translate(1116.500 237) rotate(43.400)">${ring}</g><path d="M1190 262l6 6 3 12v13l-8 4-9 10" fill="none" stroke="#0b8560" stroke-width="2"/>`;

let finger = '<ellipse cx="540" cy="438" rx="90" ry="74.500" fill="none" stroke="#178a67" stroke-width="10.500"/><ellipse cx="540" cy="438" rx="93.500" ry="78.500" fill="none" stroke="#0c5f46" stroke-width=".8"/>';
for (let i = 0; i < 64; i++) {
  const t = i * Math.PI / 32, c = Math.cos(t), s = Math.sin(t);
  finger += line(540 + 86 * c, 438 + 70 * s, 540 + 92 * c, 438 + 77 * s, '#07553d', 1);
}
finger += '<path d="M618 457l6-4 3 2 7-1 3 4-4 4-2 3-5-1-3-4z" fill="#17946c"/>';
document.getElementById('finger').innerHTML = finger;

let top_ = '', side = '';
for (let x = 459; x < 644; x += 6) {
  const edge = x > 600 || x < 475;
  top_ += `<path d="M${x} ${edge ? 238 : 244}l4 3-3 4" stroke="${edge ? '#55a98d' : '#07644a'}" stroke-width=".9" fill="none"/>`;
  if (x > 610) top_ += line(x, 237, x, 251, '#033d2d', 1.4);
}
for (let y = 357; y < 510; y += 5) {
  side += y < 455 ? line(1120, y + 3, 1127, y - 1, '#07553f', .9) : `<path d="M1113 ${y}q7 3 14 0" stroke="#62b594" stroke-width=".8" fill="none"/>`;
  if (y > 460) side += line(1115, y + 2.5, 1125, y + 2.5, '#04452f', 1.5);
}
document.getElementById('band-top').innerHTML = top_;
document.getElementById('band-side').innerHTML = side + line(1119.5, 460, 1119.5, 510, '#469f7f', .8);
```
